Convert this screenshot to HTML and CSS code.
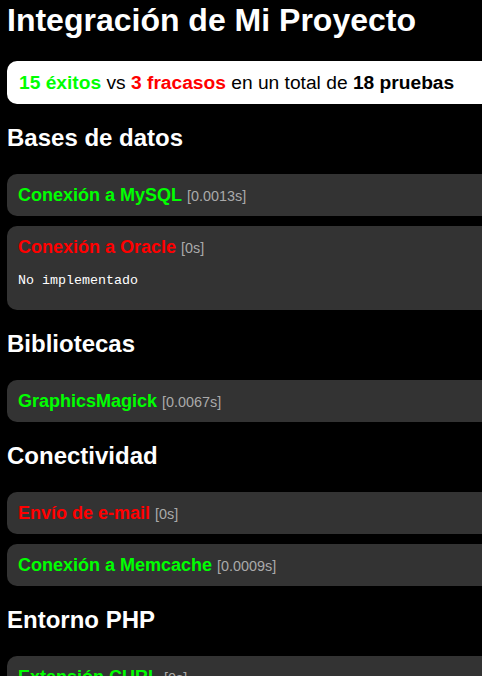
FILE: index.html
```html
<!DOCTYPE html>
<html lang="es">
<head>
<meta charset="utf-8">
<title>Integración de Mi Proyecto</title>
<link rel="stylesheet" href="styles.css">
</head>
<body>
<div class="page">
  <h1 class="title">Integración de Mi Proyecto</h1>
  <div class="summary">
    <b class="ok">15 éxitos</b> vs <b class="fail">3 fracasos</b> en un total de <b>18 pruebas</b>
  </div>

  <h2 class="group">Bases de datos</h2>
  <div class="test">
    <div class="test-head"><span class="name ok">Conexión a MySQL</span> <span class="time">[0.0013s]</span></div>
  </div>
  <div class="test">
    <div class="test-head"><span class="name fail">Conexión a Oracle</span> <span class="time">[0s]</span></div>
    <pre class="msg">No implementado</pre>
  </div>

  <h2 class="group">Bibliotecas</h2>
  <div class="test">
    <div class="test-head"><span class="name ok">GraphicsMagick</span> <span class="time">[0.0067s]</span></div>
  </div>

  <h2 class="group">Conectividad</h2>
  <div class="test">
    <div class="test-head"><span class="name fail">Envío de e-mail</span> <span class="time">[0s]</span></div>
  </div>
  <div class="test">
    <div class="test-head"><span class="name ok">Conexión a Memcache</span> <span class="time">[0.0009s]</span></div>
  </div>

  <h2 class="group">Entorno PHP</h2>
  <div class="test">
    <div class="test-head"><span class="name ok">Extensión CURL</span> <span class="time">[0s]</span></div>
  </div>
  <div class="test">
    <div class="test-head"><span class="name ok">Extensión GD</span> <span class="time">[0s]</span></div>
  </div>
</div>
</body>
</html>
```

FILE: styles.css
```css
html {
  overflow: hidden;
  background: #000;
}

body {
  margin: 0;
  padding: 2px 7px;
  background: #000;
  color: #fff;
  font-family: "Liberation Sans", Arial, sans-serif;
}

.page {
  width: 640px;
}

.title {
  margin: 0 0 22px 0;
  font-size: 32px;
  line-height: 37px;
  font-weight: bold;
  color: #fff;
}

.summary {
  background: #fff;
  color: #000;
  border-radius: 10px;
  padding: 10px 12px;
  font-size: 19.2px;
  line-height: 23px;
}

.ok {
  color: #00ff00;
}

.fail {
  color: #ff0000;
}

.group {
  margin: 20px 0 22px 0;
  font-size: 24px;
  line-height: 28px;
  font-weight: bold;
  color: #fff;
}

.test {
  background: #333;
  border-radius: 10px;
  padding: 10px 11px;
  margin-bottom: 10px;
}

.test-head {
  font-size: 18px;
  line-height: 22px;
  height: 22px;
  white-space: nowrap;
}

.name {
  font-weight: bold;
}

.time {
  font-size: 14.4px;
  line-height: 1;
  color: #aaa;
}

.msg {
  margin: 15px 0 11px 0;
  font-family: "Liberation Mono", "Courier New", monospace;
  font-size: 13.33px;
  line-height: 16px;
  color: #fff;
  padding-left: 0;
}
```
